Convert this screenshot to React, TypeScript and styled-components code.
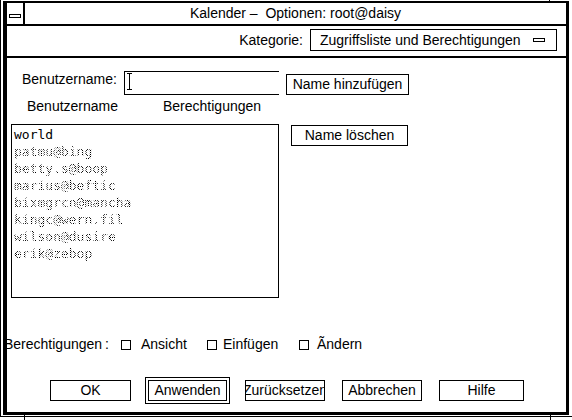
import React from "react";
import styled, { createGlobalStyle, css } from "styled-components";

const Global = createGlobalStyle`
  html, body { margin: 0; padding: 0; background: #fff; }
  body {
    font-family: "Liberation Sans", Arial, Helvetica, sans-serif;
    font-size: 14px;
    color: #000;
  }
  * { box-sizing: border-box; }
`;

const Screen = styled.div`
  position: relative;
  width: 572px;
  height: 420px;
  overflow: hidden;
  background: #fff;
`;

const Frame = styled.div`
  height: 417px;
  border-left: 1px solid #000;
  border-bottom: 1px solid #000;
  padding: 1px 0 0 2px;
`;

const Tick = styled.div<{ $x: number; $y: number; $h: number }>`
  position: absolute;
  left: ${(p) => p.$x}px;
  top: ${(p) => p.$y}px;
  width: 1px;
  height: ${(p) => p.$h}px;
  background: #000;
`;

const Window = styled.div`
  width: 566px;
  height: 414px;
  border-style: solid;
  border-color: #000;
  border-width: 2px 3px 3px 4px;
  display: flex;
  flex-direction: column;
`;

const TitleBar = styled.div`
  height: 23px;
  border-bottom: 2px solid #000;
  display: flex;
`;

const MenuButton = styled.div`
  width: 18px;
  border-right: 2px solid #000;
  padding: 11px 0 0 2px;
`;

const MenuGlyph = styled.div`
  width: 12px;
  height: 4px;
  border: 1px solid #000;
`;

const Title = styled.div`
  flex: 1;
  text-align: center;
  line-height: 21px;
  white-space: pre;
`;

const CategoryBar = styled.div`
  height: 32px;
  border-bottom: 2px solid #000;
  display: flex;
  justify-content: flex-end;
  align-items: flex-start;
  padding: 3px 9px 0 0;
`;

const CategoryLabel = styled.span`
  line-height: 22px;
  margin-right: 7px;
`;

const Dropdown = styled.div`
  width: 247px;
  height: 22px;
  border: 1px solid #000;
  display: flex;
  align-items: center;
  justify-content: space-between;
  padding: 0 11px 0 9px;
  white-space: nowrap;
`;

const DropGlyph = styled.div`
  width: 12px;
  height: 4px;
  border: 1px solid #000;
`;

const Main = styled.div`
  flex: 1;
  overflow: hidden;
  display: flex;
  flex-direction: column;
`;

const UserRow = styled.div`
  margin-top: 13px;
  height: 24px;
  display: flex;
  align-items: flex-end;
`;

const FieldLabel = styled.span`
  align-self: flex-start;
  width: 117px;
  padding-left: 15px;
  line-height: 17px;
  white-space: nowrap;
`;

const TextInput = styled.div`
  width: 155px;
  height: 24px;
  border-style: solid;
  border-color: #000;
  border-width: 1px 0 1px 1px;
  padding: 1px 0 0 1px;
  display: flex;
  align-items: flex-start;
`;

const Button = styled.div<{ $w: number; $ml?: number; $mt?: number }>`
  width: ${(p) => p.$w}px;
  height: 21px;
  margin-left: ${(p) => p.$ml ?? 0}px;
  margin-top: ${(p) => p.$mt ?? 0}px;
  border: 1px solid #000;
  background: #fff;
  display: flex;
  align-items: center;
  justify-content: center;
  overflow: hidden;
  white-space: nowrap;
  line-height: 17px;
  flex-shrink: 0;
`;

const DefaultRing = styled.div<{ $ml: number }>`
  margin-left: ${(p) => p.$ml}px;
  border: 1px solid #000;
  padding: 2px;
  flex-shrink: 0;
`;

const HeaderRow = styled.div`
  margin-top: 3px;
  display: flex;
  line-height: 17px;
  padding-left: 20px;
`;

const HeaderCell = styled.span<{ $w?: number }>`
  ${(p) => p.$w && css`width: ${p.$w}px;`}
  white-space: nowrap;
`;

const ListRow = styled.div`
  margin-top: 9px;
  display: flex;
  align-items: flex-start;
`;

const ListBox = styled.div`
  margin-left: 4px;
  width: 268px;
  height: 174px;
  border: 1px solid #000;
  padding: 1px 2px;
  font-family: "DejaVu Sans Mono", "Liberation Mono", monospace;
  font-size: 13px;
`;

const ListItem = styled.div<{ $dim?: boolean }>`
  line-height: 17px;
  height: 17px;
  white-space: nowrap;
  ${(p) =>
    p.$dim &&
    css`
      color: transparent;
      background: repeating-conic-gradient(#000 0 25%, #fff 0 50%) 0 0 / 2px 2px;
      -webkit-background-clip: text;
      background-clip: text;
      width: max-content;
    `}
`;

const PermRow = styled.div`
  margin-top: 38px;
  display: flex;
  align-items: center;
  line-height: 17px;
`;

const PermLabel = styled.span`
  margin-left: -3px;
  width: 117px;
  white-space: nowrap;
  flex-shrink: 0;
`;

const Colon = styled.span`
  margin-left: 3px;
`;

const CheckItem = styled.label<{ $w: number; $gap: number }>`
  width: ${(p) => p.$w}px;
  display: flex;
  align-items: center;
  gap: ${(p) => p.$gap}px;
  white-space: nowrap;
  flex-shrink: 0;
`;

const CheckBox = styled.span`
  width: 10px;
  height: 10px;
  border: 1px solid #000;
  display: inline-block;
`;

const ButtonRow = styled.div`
  margin-top: 24px;
  height: 27px;
  display: flex;
  align-items: center;
`;

const Cursor = () => (
  <svg width="6" height="17" viewBox="0 0 6 17" style={{ marginLeft: 1 }}>
    <path
      d="M0 0.5h5M2.5 1v15M0 16.5h5"
      stroke="#000"
      strokeWidth="1"
      fill="none"
      shapeRendering="crispEdges"
    />
  </svg>
);

const users: { name: string; dim?: boolean }[] = [
  { name: "world" },
  { name: "patmu@bing", dim: true },
  { name: "betty.s@boop", dim: true },
  { name: "marius@beftic", dim: true },
  { name: "bixmgrcn@mancha", dim: true },
  { name: "kingc@wern.fil", dim: true },
  { name: "wilson@dusire", dim: true },
  { name: "erik@zebop", dim: true },
];

export default function App() {
  return (
    <Screen>
      <Global />
      <Frame>
        <Window>
          <TitleBar>
            <MenuButton>
              <MenuGlyph />
            </MenuButton>
            <Title>{"Kalender –  Optionen: root@daisy"}</Title>
          </TitleBar>
          <CategoryBar>
            <CategoryLabel>Kategorie:</CategoryLabel>
            <Dropdown>
              <span>Zugriffsliste und Berechtigungen</span>
              <DropGlyph />
            </Dropdown>
          </CategoryBar>
          <Main>
            <UserRow>
              <FieldLabel>Benutzername:</FieldLabel>
              <TextInput>
                <Cursor />
              </TextInput>
              <Button $w={123} $ml={7}>
                Name hinzufügen
              </Button>
            </UserRow>
            <HeaderRow>
              <HeaderCell $w={136}>Benutzername</HeaderCell>
              <HeaderCell>Berechtigungen</HeaderCell>
            </HeaderRow>
            <ListRow>
              <ListBox>
                {users.map((u) => (
                  <ListItem key={u.name} $dim={u.dim}>
                    {u.name}
                  </ListItem>
                ))}
              </ListBox>
              <Button $w={117} $ml={12} $mt={1}>
                Name löschen
              </Button>
            </ListRow>
            <PermRow>
              <PermLabel>
                Berechtigungen<Colon>:</Colon>
              </PermLabel>
              <CheckItem $w={86} $gap={10}>
                <CheckBox />
                Ansicht
              </CheckItem>
              <CheckItem $w={92} $gap={6}>
                <CheckBox />
                Einfügen
              </CheckItem>
              <CheckItem $w={80} $gap={8}>
                <CheckBox />
                Ãndern
              </CheckItem>
            </PermRow>
            <ButtonRow>
              <Button $w={81} $ml={43}>
                OK
              </Button>
              <DefaultRing $ml={14}>
                <Button $w={79}>Anwenden</Button>
              </DefaultRing>
              <Button $w={80} $ml={15}>
                Zurücksetzen
              </Button>
              <Button $w={80} $ml={17}>
                Abbrechen
              </Button>
              <Button $w={85} $ml={17}>
                Hilfe
              </Button>
            </ButtonRow>
          </Main>
        </Window>
      </Frame>
      <Tick $x={549} $y={0} $h={3} />
      <Tick $x={24} $y={414} $h={6} />
      <Tick $x={550} $y={414} $h={6} />
    </Screen>
  );
}
